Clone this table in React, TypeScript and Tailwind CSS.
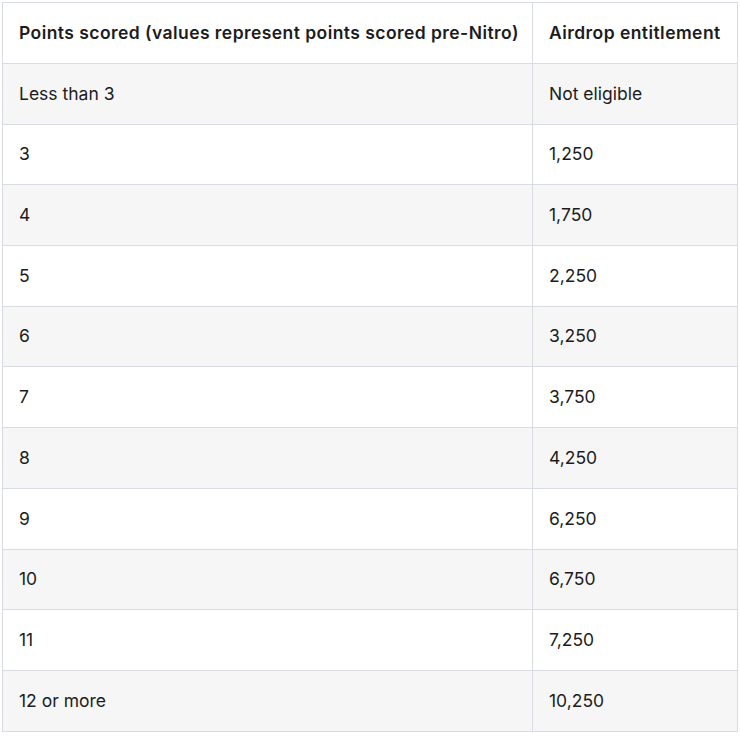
const ROWS: [string, string][] = [
  ["Less than 3", "Not eligible"],
  ["3", "1,250"],
  ["4", "1,750"],
  ["5", "2,250"],
  ["6", "3,250"],
  ["7", "3,750"],
  ["8", "4,250"],
  ["9", "6,250"],
  ["10", "6,750"],
  ["11", "7,250"],
  ["12 or more", "10,250"],
];

export default function App() {
  return (
    <div className="p-[2px] bg-white font-['Inter',sans-serif] text-[17.5px] text-[#1c1c1e]">
      <table className="w-[736px] table-fixed border-collapse">
        <colgroup>
          <col className="w-[530px]" />
          <col />
        </colgroup>
        <thead>
          <tr className="h-[61px]">
            <th className="whitespace-nowrap border border-[#d9dbe3] px-4 text-left font-semibold tracking-[0.025em]">
              Points scored (values represent points scored pre-Nitro)
            </th>
            <th className="whitespace-nowrap border border-[#d9dbe3] px-4 text-left font-semibold tracking-[0.025em]">Airdrop entitlement</th>
          </tr>
        </thead>
        <tbody>
          {ROWS.map(([pts, amt], i) => (
            <tr key={pts} className={`h-[60.7px] ${i % 2 === 0 ? "bg-[#f6f6f6]" : "bg-white"}`}>
              <td className="border border-[#d9dbe3] px-4">{pts}</td>
              <td className="border border-[#d9dbe3] px-4">{amt}</td>
            </tr>
          ))}
        </tbody>
      </table>
    </div>
  );
}
